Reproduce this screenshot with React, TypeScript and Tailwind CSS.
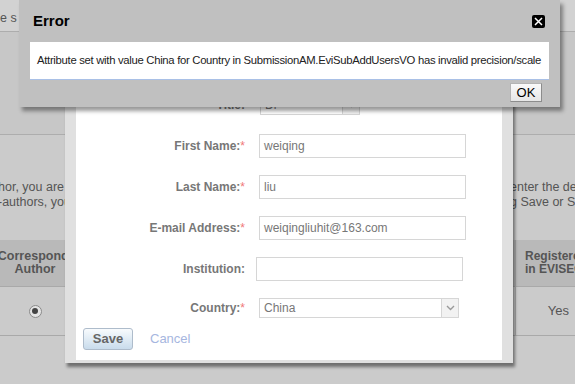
import React from "react";

const sans = { fontFamily: '"Liberation Sans", Arial, sans-serif' };

function Chevron() {
  return (
    <svg width="9" height="6" viewBox="0 0 9 6" fill="none">
      <path d="M1 1l3.5 3.5L8 1" stroke="#9a9a9a" strokeWidth="1.4" />
    </svg>
  );
}

function Field({ label, required, children }: { label: string; required?: boolean; children: React.ReactNode }) {
  return (
    <div className="flex h-[41px] items-center">
      <div className="w-[169px] text-right text-[12px] font-bold text-[#777]">
        {label}
        {required && <span className="font-normal text-[#f07878]">*</span>}
      </div>
      {children}
    </div>
  );
}

function TextBox({ value, className }: { value: string; className: string }) {
  return (
    <div className={`flex h-[24px] items-center border border-[#d6d6d6] bg-white pl-[4px] text-[12px] text-[#777] ${className}`}>
      {value}
    </div>
  );
}

function SelectBox({ value, className }: { value: string; className: string }) {
  return (
    <div className={`flex h-[20px] items-center justify-between border border-[#d6d6d6] bg-white text-[12px] text-[#777] ${className}`}>
      <span className="pl-[4px]">{value}</span>
      <span className="flex h-full w-[17px] items-center justify-center border-l border-[#d6d6d6] bg-[#f2f2f2]">
        <Chevron />
      </span>
    </div>
  );
}

export default function App() {
  return (
    <div className="relative h-[384px] w-[575px] overflow-hidden bg-[#cbcbcb] text-[#555]" style={sans}>
      {/* page behind the overlay */}
      <div className="h-[32px] whitespace-nowrap border-b border-[#adadad] bg-[#d2d2d2] pt-[9px] text-[12.5px]">
        e s
      </div>
      <div className="h-[103px] border-b border-[#adadad] bg-[#c7c7c7]" />
      <div className="flex h-[105px] justify-between pt-[45px] text-[12.5px] leading-[15px]">
        <div className="-ml-[2px] whitespace-nowrap">
          <div>hor, you are a</div>
          <div>-authors, you</div>
        </div>
        <div className="w-[65px] whitespace-nowrap">
          <div>enter the de</div>
          <div>g Save or Sa</div>
        </div>
      </div>
      <div className="flex w-[575px]">
        <div className="w-[70px]">
          <div className="flex h-[47px] flex-col items-center justify-center whitespace-nowrap border-b border-[#a9a9a9] bg-[#b9b9b9] text-[12.5px] font-bold leading-[13px] text-[#555]">
            <span>Correspondi</span>
            <span>Author</span>
          </div>
          <div className="flex h-[49px] items-center justify-center border-b border-[#a9a9a9]">
            <span className="flex h-[13px] w-[13px] items-center justify-center rounded-full border border-[#8a8a8a] bg-[#e4e4e4]">
              <span className="h-[6px] w-[6px] rounded-full bg-[#444]" />
            </span>
          </div>
        </div>
        <div className="flex-1">
          <div className="h-[47px] border-b border-[#a9a9a9] bg-[#b9b9b9]" />
          <div className="h-[49px] border-b border-[#a9a9a9]" />
        </div>
        <div className="w-[60px] border-l border-[#a9a9a9]">
          <div className="flex h-[47px] flex-col justify-center whitespace-nowrap border-b border-[#a9a9a9] bg-[#b9b9b9] pl-[9px] text-[12px] font-bold leading-[13px] text-[#555]">
            <span>Registere</span>
            <span>in EVISE©</span>
          </div>
          <div className="flex h-[49px] items-center justify-end border-b border-[#a9a9a9] pr-[6px] text-[13px]">Yes</div>
        </div>
      </div>

      {/* add co-author dialog */}
      <div className="absolute left-[65px] top-[60px] h-[303px] w-[448px] border-x-[11px] border-b-[3px] border-[#e0e0e0] bg-white pt-[24px] shadow-[2px_4px_3px_rgba(0,0,0,0.45)]">
        <Field label="Title:">
          <SelectBox value="Dr" className="ml-[15px] w-[100px]" />
        </Field>
        <Field label="First Name:" required>
          <TextBox value="weiqing" className="ml-[14px] w-[207px]" />
        </Field>
        <Field label="Last Name:" required>
          <TextBox value="liu" className="ml-[14px] w-[207px]" />
        </Field>
        <Field label="E-mail Address:" required>
          <TextBox value="weiqingliuhit@163.com" className="ml-[14px] w-[207px]" />
        </Field>
        <Field label="Institution:">
          <TextBox value="" className="ml-[11px] w-[207px]" />
        </Field>
        <div className="flex h-[38px] items-center">
          <div className="w-[169px] text-right text-[12px] font-bold text-[#777]">
            Country:<span className="font-normal text-[#f07878]">*</span>
          </div>
          <SelectBox value="China" className="ml-[14px] w-[200px]" />
        </div>
        <div className="mt-[1px] flex items-center pl-[7px]">
          <button className="h-[22px] w-[50px] rounded-[3px] border border-[#aebccb] bg-gradient-to-b from-[#f8fbfd] to-[#c9dcec] text-[13px] font-bold text-[#666]">
            Save
          </button>
          <span className="ml-[17px] text-[13px] text-[#a6b6e0]">Cancel</span>
        </div>
      </div>

      {/* error dialog */}
      <div className="absolute left-[19px] top-0 flex h-[107px] w-[541px] flex-col bg-[#c0c0c0] shadow-[3px_4px_4px_rgba(0,0,0,0.4)]">
        <div className="flex h-[42px] items-center justify-between pl-[14px] pr-[15px]">
          <span className="text-[15px] font-bold text-black">Error</span>
          <span className="flex h-[13px] w-[13px] items-center justify-center rounded-[2px] bg-black">
            <svg width="9" height="9" viewBox="0 0 9 9">
              <path d="M1 1l7 7M8 1L1 8" stroke="white" strokeWidth="1.5" />
            </svg>
          </span>
        </div>
        <div className="mx-[11px] flex h-[38px] items-center whitespace-nowrap border-b border-[#a9c0e6] bg-white pl-[7px] text-[11.3px] tracking-[-0.3px] text-[#222]">
          Attribute set with value China for Country in SubmissionAM.EviSubAddUsersVO has invalid precision/scale
        </div>
        <div className="flex justify-end pr-[18px] pt-[3px]">
          <button className="flex h-[19px] w-[32px] items-center justify-center border border-[#b4b4b4] border-b-[#8c8c8c] border-r-[#8c8c8c] bg-gradient-to-b from-[#fafafa] to-[#e6e6e6] text-[13px] text-black">
            OK
          </button>
        </div>
      </div>
    </div>
  );
}
